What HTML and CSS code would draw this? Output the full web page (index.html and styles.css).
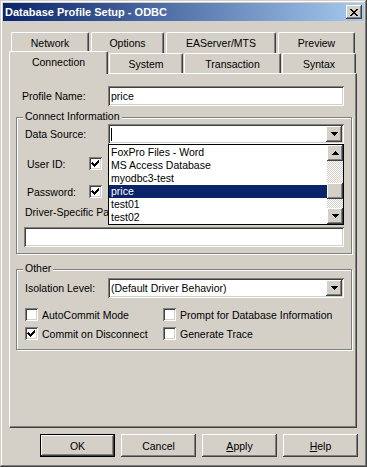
FILE: index.html
```html
<!DOCTYPE html>
<html>
  <head>
    <title>Database Profile Setup - ODBC</title>
    <link rel="stylesheet" href="styles.css">
  </head>

  <body>
    <div class="window">

      <div class="titlebar">
        <span class="title">Database Profile Setup - ODBC</span>
        <span class="bevel close">
          <svg width="8" height="7" viewBox="0 0 8 7" shape-rendering="crispEdges"><path d="M0 0h2v1H0zM6 0h2v1H6zM1 1h2v1H1zM5 1h2v1H5zM2 2h4v1H2zM3 3h2v1H3zM2 4h4v1H2zM1 5h2v1H1zM5 5h2v1H5zM0 6h2v1H0zM6 6h2v1H6z" fill="#000"/></svg>
        </span>
      </div>

      <div class="tabs">
        <div class="tabrow back">
          <div class="tab" style="width: 78px">Network</div>
          <div class="tab" style="width: 73px">Options</div>
          <div class="tab" style="width: 110px">EAServer/MTS</div>
          <div class="tab" style="width: 77px">Preview</div>
        </div>
        <div class="tabrow front">
          <div class="tab selected" style="width: 99px">Connection</div>
          <div class="tab" style="width: 74px">System</div>
          <div class="tab" style="width: 97px">Transaction</div>
          <div class="tab" style="width: 74px">Syntax</div>
        </div>
      </div>

      <div class="panel">

        <div class="row profile">
          <span class="lbl lbl-profile">Profile Name:</span>
          <div class="field wide">price</div>
        </div>

        <div class="group connect">
          <span class="legend">Connect Information</span>

          <div class="row">
            <span class="lbl lbl-group">Data Source:</span>
            <div class="combo-wrap">
              <div class="field combo">
                <span class="caret"></span>
                <span class="bevel dropbtn">
                  <svg width="7" height="4" viewBox="0 0 7 4" shape-rendering="crispEdges"><path d="M0 0h7v1H0zM1 1h5v1H1zM2 2h3v1H2zM3 3h1v1H3z" fill="#000"/></svg>
                </span>
              </div>
              <div class="droplist">
                <div class="items">
                  <div class="item">FoxPro Files - Word</div>
                  <div class="item">MS Access Database</div>
                  <div class="item">myodbc3-test</div>
                  <div class="item sel">price</div>
                  <div class="item">test01</div>
                  <div class="item">test02</div>
                </div>
                <div class="scroll">
                  <span class="bevel sbtn">
                    <svg width="7" height="4" viewBox="0 0 7 4" shape-rendering="crispEdges"><path d="M3 0h1v1H3zM2 1h3v1H2zM1 2h5v1H1zM0 3h7v1H0z" fill="#000"/></svg>
                  </span>
                  <span class="track top"></span>
                  <span class="bevel sbtn"></span>
                  <span class="track rest"></span>
                  <span class="bevel sbtn">
                    <svg width="7" height="4" viewBox="0 0 7 4" shape-rendering="crispEdges"><path d="M0 0h7v1H0zM1 1h5v1H1zM2 2h3v1H2zM3 3h1v1H3z" fill="#000"/></svg>
                  </span>
                </div>
              </div>
            </div>
          </div>

          <div class="row check-row first">
            <span class="lbl lbl-check">User ID:</span>
            <span class="check on">
              <svg width="13" height="13" viewBox="0 0 13 13" shape-rendering="crispEdges"><path d="M3 5h1v1h1v1h1v-1h1v-1h1v-1h1v-1h1v3h-1v1h-1v1h-1v1h-1v1h-1v-1h-1v-1h-1v-1h-1z" fill="#000"/></svg>
            </span>
          </div>

          <div class="row check-row second">
            <span class="lbl lbl-check">Password:</span>
            <span class="check on">
              <svg width="13" height="13" viewBox="0 0 13 13" shape-rendering="crispEdges"><path d="M3 5h1v1h1v1h1v-1h1v-1h1v-1h1v-1h1v3h-1v1h-1v1h-1v1h-1v1h-1v-1h-1v-1h-1v-1h-1z" fill="#000"/></svg>
            </span>
          </div>

          <div class="driver-label">Driver-Specific Parameters:</div>
          <div class="field driver"></div>
        </div>

        <div class="group other">
          <span class="legend">Other</span>

          <div class="row">
            <span class="lbl lbl-group">Isolation Level:</span>
            <div class="field combo">
              <span>(Default Driver Behavior)</span>
              <span class="bevel dropbtn">
                <svg width="7" height="4" viewBox="0 0 7 4" shape-rendering="crispEdges"><path d="M0 0h7v1H0zM1 1h5v1H1zM2 2h3v1H2zM3 3h1v1H3z" fill="#000"/></svg>
              </span>
            </div>
          </div>

          <div class="opts first">
            <div class="opt col1"><span class="check"></span>AutoCommit Mode</div>
            <div class="opt"><span class="check"></span>Prompt for Database Information</div>
          </div>
          <div class="opts second">
            <div class="opt col1">
              <span class="check on">
                <svg width="13" height="13" viewBox="0 0 13 13" shape-rendering="crispEdges"><path d="M3 5h1v1h1v1h1v-1h1v-1h1v-1h1v-1h1v3h-1v1h-1v1h-1v1h-1v1h-1v-1h-1v-1h-1v-1h-1z" fill="#000"/></svg>
              </span>Commit on Disconnect
            </div>
            <div class="opt"><span class="check"></span>Generate Trace</div>
          </div>
        </div>

      </div>

      <div class="buttons">
        <div class="btn default">OK</div>
        <div class="btn">Cancel</div>
        <div class="btn"><span><u>A</u>pply</span></div>
        <div class="btn"><span><u>H</u>elp</span></div>
      </div>

    </div>
  </body>
</html>
```

FILE: styles.css
```css
body {
  margin: 0;
  background-color: #d4d0c8;
  font-family: "Liberation Sans", Arial, sans-serif;
  font-size: 10.5px;
  color: #000;
}

.window {
  width: 367px;
  height: 467px;
  box-sizing: border-box;
  padding: 3px;
  background-color: #d4d0c8;
  box-shadow: inset -1px -1px #404040, inset 1px 1px #d4d0c8, inset -2px -2px #808080, inset 2px 2px #fff;
}

/* raised 3d edge used by buttons and scroll parts */
.bevel {
  box-sizing: border-box;
  display: flex;
  align-items: center;
  justify-content: center;
  background-color: #d4d0c8;
  box-shadow: inset -1px -1px #404040, inset 1px 1px #fff, inset -2px -2px #808080, inset 2px 2px #d4d0c8;
}

.titlebar {
  height: 18px;
  display: flex;
  align-items: center;
  justify-content: space-between;
  padding: 0 2px;
  background: linear-gradient(to right, #0a246a, #a6caf0);
  color: #fff;
  font-weight: bold;
  font-size: 11px;
}

.close {
  width: 16px;
  height: 14px;
}

/* tabs */
.tabs {
  margin: 11px 0 0 6px;
  width: 348px;
}

.tabrow {
  display: flex;
  align-items: flex-end;
}

.tabrow.back {
  height: 21px;
  padding-left: 2px;
  gap: 2px;
}

.tabrow.front {
  height: 20px;
  gap: 1px;
}

.tab {
  box-sizing: border-box;
  height: 100%;
  display: flex;
  align-items: center;
  justify-content: center;
  background-color: #d4d0c8;
  border-top: 1px solid #fff;
  border-left: 1px solid #fff;
  border-right: 1px solid #404040;
  border-radius: 2px 2px 0 0;
  box-shadow: inset -1px 0 #808080;
}

.tab.selected {
  height: 23px;
  margin-bottom: -1px;
  padding-bottom: 2px;
  position: relative;
  z-index: 1;
}

.panel {
  margin-left: 6px;
  width: 348px;
  height: 355px;
  box-sizing: border-box;
  border-top: 1px solid #fff;
  border-left: 1px solid #fff;
  border-right: 1px solid #404040;
  border-bottom: 1px solid #404040;
  box-shadow: inset -1px -1px #808080;
  padding-top: 12px;
}

.row {
  display: flex;
  align-items: center;
}

.profile {
  padding-left: 12px;
}

.lbl-profile { width: 86px; }
.lbl-group { width: 83px; }
.lbl-check { width: 62px; }

/* sunken edit box */
.field {
  box-sizing: border-box;
  height: 20px;
  display: flex;
  align-items: center;
  padding: 0 3px;
  background-color: #fff;
  box-shadow: inset 1px 1px #808080, inset -1px -1px #fff, inset 2px 2px #404040, inset -2px -2px #d4d0c8;
}

.wide { width: 236px; }

.combo {
  width: 236px;
  padding-right: 2px;
  justify-content: space-between;
}

.caret {
  width: 1px;
  height: 13px;
  background-color: #000;
}

.dropbtn {
  width: 16px;
  height: 16px;
}

/* group boxes */
.group {
  position: relative;
  margin: 11px 0 0 6px;
  width: 336px;
  box-sizing: border-box;
  border: 1px solid #808080;
  box-shadow: inset 1px 1px #fff, 1px 1px #fff;
  padding: 6px 7px 6px 8px;
}

.group.other {
  margin-top: 15px;
  padding-top: 8px;
  padding-bottom: 9px;
}

.legend {
  position: absolute;
  top: -8px;
  left: 6px;
  padding: 0 2px;
  line-height: 13px;
  background-color: #d4d0c8;
}

.combo-wrap {
  position: relative;
}

.droplist {
  position: absolute;
  top: 20px;
  left: 0;
  z-index: 2;
  width: 236px;
  height: 81px;
  box-sizing: border-box;
  display: flex;
  border: 1px solid #000;
  background-color: #fff;
}

.items {
  flex: 1;
  padding-top: 1px;
}

.item {
  height: 13px;
  line-height: 13px;
  padding-left: 2px;
  white-space: nowrap;
}

.item.sel {
  background-color: #0a246a;
  color: #fff;
}

.scroll {
  width: 16px;
  display: flex;
  flex-direction: column;
}

.sbtn {
  width: 16px;
  height: 16px;
  flex: none;
}

.track {
  background: repeating-conic-gradient(#fff 0 25%, #d4d0c8 0 50%) 0 0 / 2px 2px;
}

.track.top { height: 22px; }
.track.rest { flex: 1; }

.check-row {
  padding-left: 2px;
}

.check-row.first { margin-top: 13px; }
.check-row.second { margin-top: 15px; }

.check {
  flex: none;
  width: 13px;
  height: 13px;
  box-sizing: border-box;
  background-color: #fff;
  box-shadow: inset 1px 1px #808080, inset -1px -1px #fff, inset 2px 2px #404040, inset -2px -2px #d4d0c8;
}

.check svg {
  display: block;
}

/* the open list covers the end of this label */
.driver-label {
  margin-top: 8px;
  width: 83px;
  overflow: hidden;
  line-height: 13px;
  white-space: nowrap;
}

.field.driver {
  margin: 8px 0 0 -1px;
  width: 320px;
}

.opts {
  display: flex;
  align-items: center;
}

.opts.first { margin-top: 10px; }
.opts.second { margin-top: 6px; }

.opt {
  display: flex;
  align-items: center;
  gap: 4px;
  height: 13px;
  white-space: nowrap;
}

.opt.col1 { width: 138px; }

/* bottom buttons */
.buttons {
  display: flex;
  justify-content: flex-end;
  gap: 6px;
  margin-top: 6px;
  padding-right: 6px;
}

.btn {
  width: 75px;
  height: 23px;
  box-sizing: border-box;
  display: flex;
  align-items: center;
  justify-content: center;
  background-color: #d4d0c8;
  box-shadow: inset -1px -1px #404040, inset 1px 1px #fff, inset -2px -2px #808080, inset 2px 2px #d4d0c8;
}

.btn.default {
  box-shadow: inset 0 0 0 1px #000, inset -2px -2px #404040, inset 2px 2px #fff, inset -3px -3px #808080, inset 3px 3px #d4d0c8;
}
```
